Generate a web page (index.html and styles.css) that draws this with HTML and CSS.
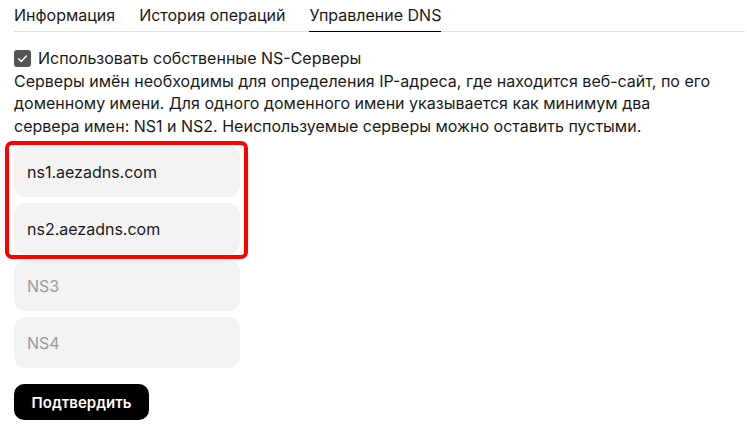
FILE: index.html
```html
<!DOCTYPE html>
<html lang="ru">
<head>
<meta charset="utf-8">
<link rel="stylesheet" href="styles.css">
</head>
<body>
<div class="page">
  <nav class="tabs">
    <span class="tab">Информация</span>
    <span class="tab">История операций</span>
    <span class="tab active">Управление DNS</span>
  </nav>
  <section class="dns">
    <label class="check">
      <span class="box"><svg viewBox="0 0 17 17" width="17" height="17"><path d="M4.6 8.8l2.6 2.6 5.2-5.4" fill="none" stroke="#fff" stroke-width="1.4" stroke-linecap="round" stroke-linejoin="round"/></svg></span>
      <span>Использовать собственные NS-Серверы</span>
    </label>
    <p class="desc">Серверы имён необходимы для определения IP-адреса, где находится веб-сайт, по его доменному имени. Для одного доменного имени указывается как минимум два сервера имен: NS1 и NS2. Неиспользуемые серверы можно оставить пустыми.</p>
    <div class="fields">
      <div class="highlight">
        <div class="field">ns1.aezadns.com</div>
        <div class="field">ns2.aezadns.com</div>
      </div>
      <div class="field empty">NS3</div>
      <div class="field empty">NS4</div>
    </div>
    <button class="submit">Подтвердить</button>
  </section>
</div>
</body>
</html>
```

FILE: styles.css
```css
* { box-sizing: border-box; }
body {
  margin: 0;
  background: #fff;
  font-family: Inter, "Noto Sans", sans-serif;
  font-size: 16px;
  color: #1a1a1a;
}
.page {
  padding: 0 2px 0 14px;
}
.tabs {
  display: flex;
  gap: 24px;
  border-bottom: 1px solid #e2e2e2;
  padding-top: 5px;
}
.tab {
  line-height: 20px;
  padding-bottom: 6px;
  color: #1a1a1a;
}
.tab.active {
  border-bottom: 1.5px solid #000;
  margin-bottom: -1px;
}
.dns {
  padding-top: 15px;
}
.check {
  display: flex;
  align-items: center;
  gap: 7px;
  line-height: 22.5px;
}
.box {
  width: 17px;
  height: 17px;
  border-radius: 3px;
  background: #555;
  display: flex;
}
.desc {
  margin: 0;
  max-width: 700px;
  line-height: 22.5px;
}
.fields {
  margin-top: 9px;
  width: 226px;
  display: flex;
  flex-direction: column;
  gap: 6px;
}
.highlight {
  position: relative;
  display: flex;
  flex-direction: column;
  gap: 6px;
}
.highlight::after {
  content: "";
  position: absolute;
  top: -5px;
  left: -9px;
  right: -8px;
  bottom: -5px;
  border: 4px solid #f00;
  border-radius: 7px;
}
.field {
  height: 51px;
  border-radius: 12px;
  background: #f3f3f3;
  padding: 0 13px;
  display: flex;
  align-items: center;
  color: #1a1a1a;
}
.field.empty {
  color: #9a9a9a;
}
.submit {
  margin-top: 16px;
  height: 36px;
  width: 135px;
  border: 0;
  border-radius: 10px;
  background: #000;
  color: #fff;
  font-family: Inter, "Noto Sans", sans-serif;
  font-size: 15px;
  font-weight: 600;
  padding: 0;
}
```
